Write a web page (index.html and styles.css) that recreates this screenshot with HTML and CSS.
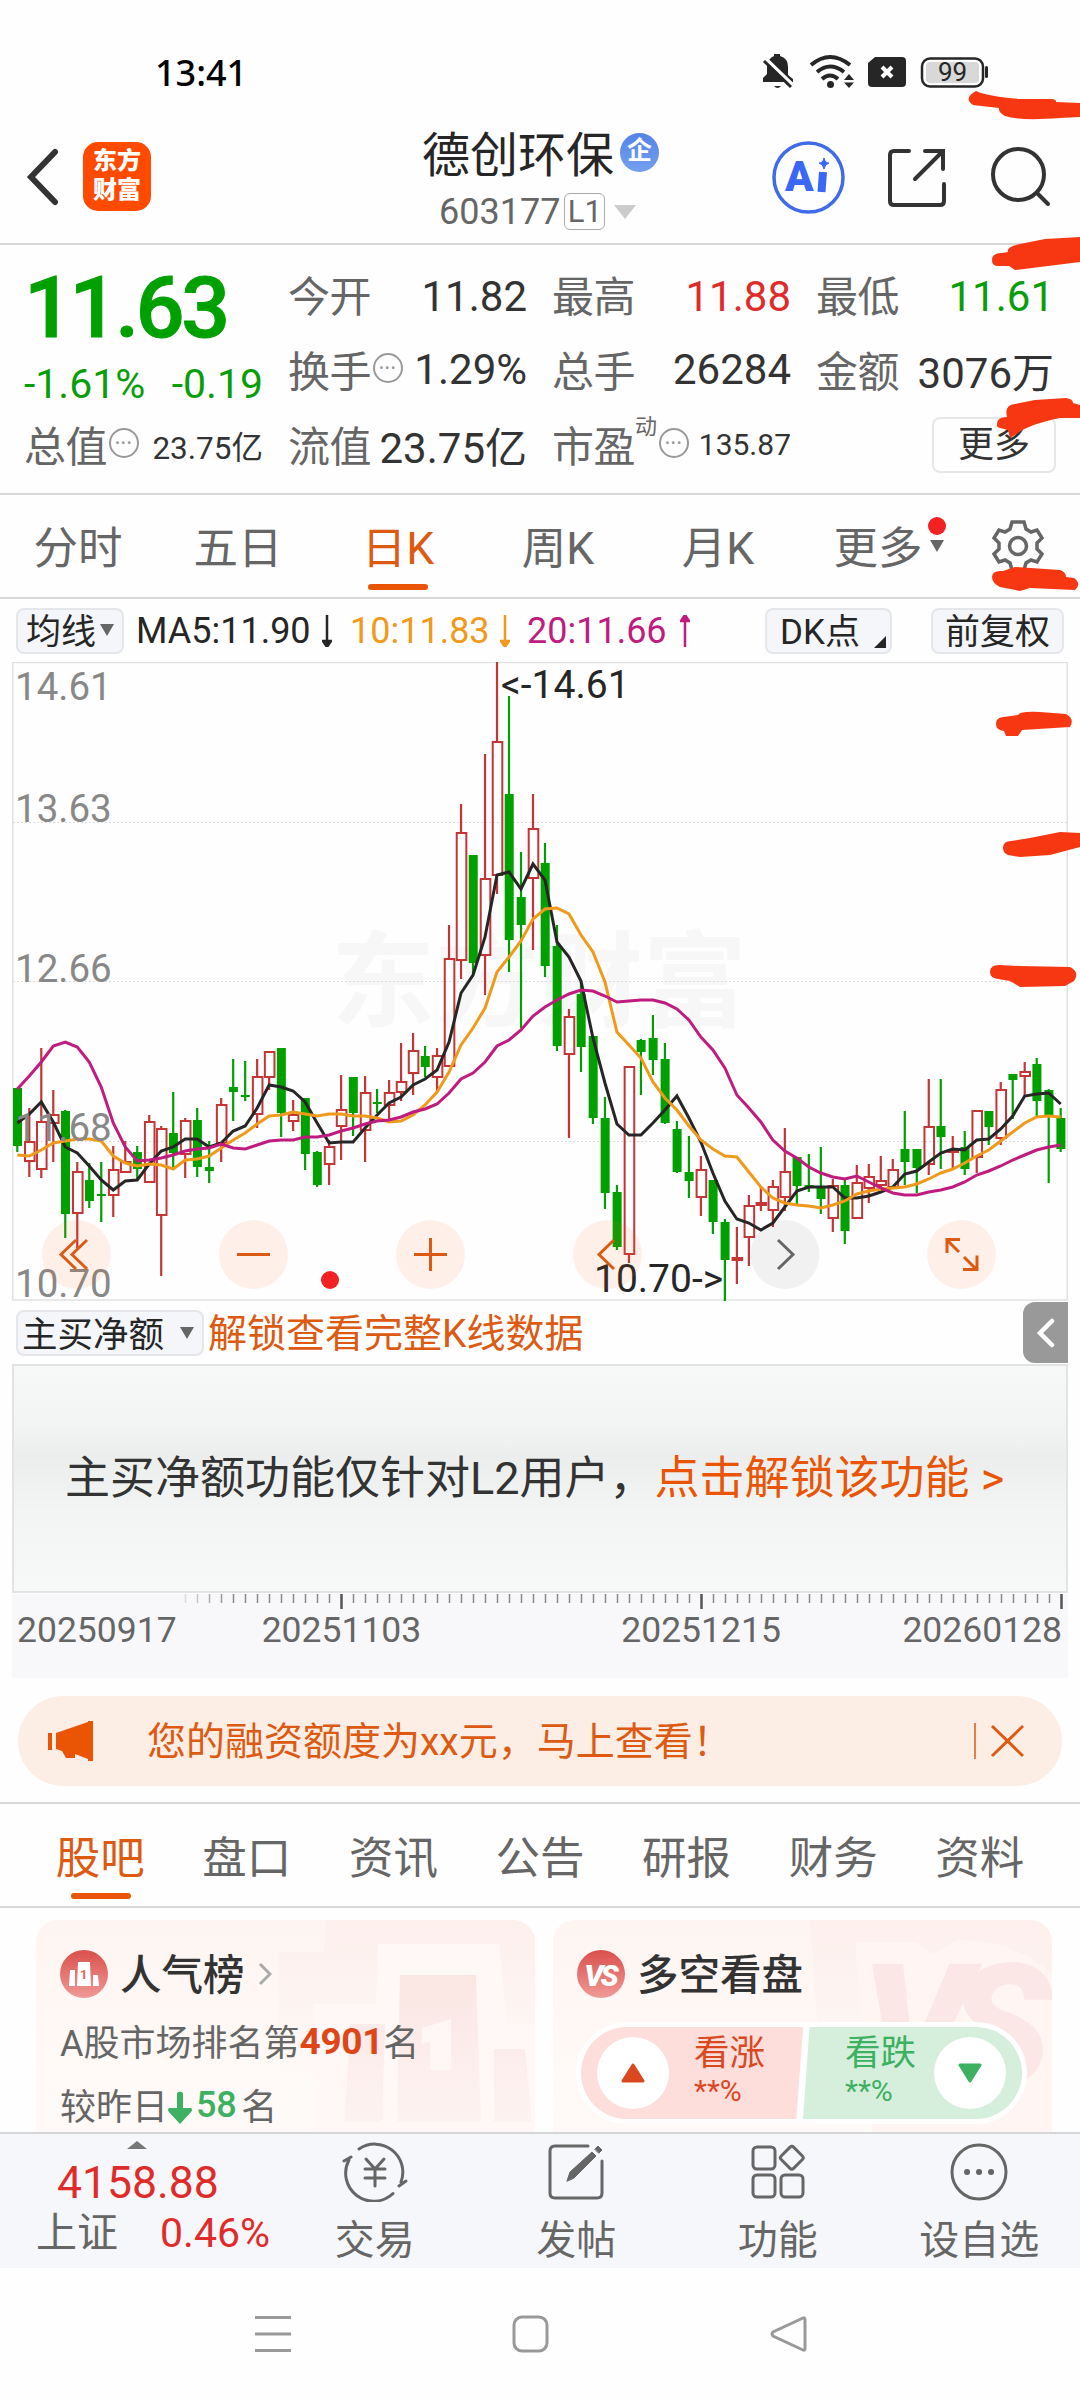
FILE: index.html
```html
<!DOCTYPE html>
<html lang="zh-CN">
<head>
    <meta charset="UTF-8">
    <meta name="viewport" content="width=device-width, initial-scale=1.0">
    <title>德创环保 603177</title>
    <link rel="stylesheet" href="styles.css">
</head>
<body>
<div class="screen">
    <div class="status-bar">
        <span class="clock">13:41</span>
        <svg class="status-icons" width="230" height="40" viewBox="760 52 230 40">
            <g fill="#262626">
                <path d="M763 82v-4l4-4V67q1-9 7-11v-2h6v2q8 2 8 11v8l5 4v3z"/>
                <path d="M774 86h7q-3.500 4-7 0z"/>
                <path d="M765 58l28 27" stroke="#fff" stroke-width="3.500"/>
                <path d="M764 61l27 26" stroke="#262626" stroke-width="3"/>
                <circle cx="830.500" cy="84.500" r="3.500"/>
                <path d="M844 80l5-6 5 6zM844 82.500l5 5.500 5-5.500z"/>
                <path d="M868 63l7-6h27q4 0 4 4v22q0 4-4 4h-30q-4 0-4-4z"/>
                <rect x="985" y="66" width="3" height="12" rx="1.500"/>
            </g>
            <g fill="none" stroke="#262626" stroke-width="4">
                <path d="M811 65q19-16 39 0M817 72q13-11 27 0M822 79q8-7 16 0"/>
                <path d="M882 67l10 10M892 67l-10 10" stroke="#fff"/>
                <rect x="922" y="58.500" width="61" height="28" rx="8" stroke-width="2.500"/>
            </g>
            <rect x="926" y="62" width="53" height="21" rx="4" fill="#d8d8d8"/>
            <text x="952.500" y="81" class="battery-text">99</text>
        </svg>
    </div>

    <div class="header">
        <svg class="back" width="34" height="58" viewBox="0 0 34 58"><path d="M29 4L5 29l24 25" /></svg>
        <div class="logo">东方<br>财富</div>
        <div class="title">
            <div class="name">德创环保<span class="qi">企</span></div>
            <div class="code">603177<span class="level">L1</span><i class="down"></i></div>
        </div>
        <svg class="tools" width="290" height="80" viewBox="770 137 290 80">
            <circle cx="808.500" cy="177.500" r="34.500" fill="none" stroke="#3f6be8" stroke-width="3.500"/>
            <path d="M824 158q1 5 5 5-4 1-5 6-1-5-5-6 4 0 5-5z" fill="#3a67f5" stroke="#3a67f5"/>
            <text x="785" y="191" class="ai">A</text>
            <path d="M823 172l-1.500 20" stroke="#3a67f5" stroke-width="8"/>
            <g fill="none" stroke="#333" stroke-width="4" stroke-linecap="round">
                <path d="M909 151h-15q-4 0-4 4v46q0 4 4 4h46q4 0 4-4v-17M925 151h18v18M942 152l-27 27"/>
                <circle cx="1018.500" cy="174.500" r="25.500"/>
                <path d="M1037 193l11 11"/>
            </g>
        </svg>
    </div>

    <div class="quote">
        <div class="price-col">
            <div class="price">11.63</div>
            <div class="change"><span>-1.61%</span><span>-0.19</span></div>
            <div class="item small"><label>总值</label><i class="dots">•••</i><b>23.75亿</b></div>
        </div>
        <div class="col">
            <div class="item"><label>今开</label><b>11.82</b></div>
            <div class="item"><label>换手</label><i class="dots">•••</i><b>1.29%</b></div>
            <div class="item"><label>流值</label><b>23.75亿</b></div>
        </div>
        <div class="col">
            <div class="item"><label>最高</label><b class="red">11.88</b></div>
            <div class="item"><label>总手</label><b>26284</b></div>
            <div class="item small pe"><label>市盈</label><sup>动</sup><i class="dots">•••</i><b>135.87</b></div>
        </div>
        <div class="col last">
            <div class="item"><label>最低</label><b class="green">11.61</b></div>
            <div class="item"><label>金额</label><b>3076万</b></div>
            <div class="item"><span class="more-btn">更多</span></div>
        </div>
    </div>

    <div class="period-tabs">
        <span>分时</span>
        <span>五日</span>
        <span class="active">日K</span>
        <span>周K</span>
        <span>月K</span>
        <span class="has-dot">更多<i class="down"></i></span>
        <svg width="56" height="56" viewBox="-28 -28 56 56">
            <path d="M-6-24H6L8-17 13-14 19-16 24-8 19-3V3L24 8 19 16 13 14 8 17 6 24H-6L-8 17-13 14-19 16-24 8-19 3V-3L-24-8-19-16-13-14-8-17z"/>
            <circle r="8.500"/>
        </svg>
    </div>

    <div class="ma-bar">
        <span class="chip ma-chip">均线<i class="down"></i></span>
        <span class="ma5">MA5:11.90</span><svg class="arr" width="10" height="32"><path d="M5 0v28M1 26l4 6 4-6z" stroke="#262626" fill="#262626"/></svg>
        <span class="ma10">10:11.83</span><svg class="arr" width="10" height="32"><path d="M5 0v28M1 26l4 6 4-6z" stroke="#ef9a1a" fill="#ef9a1a"/></svg>
        <span class="ma20">20:11.66</span><svg class="arr" width="10" height="32"><path d="M5 32V4M1 6l4-6 4 6z" stroke="#c01c80" fill="#c01c80"/></svg>
        <span class="chip dk">DK点<i class="corner"></i></span>
        <span class="chip fq">前复权</span>
    </div>

    <svg class="chart" width="1080" height="640" viewBox="-12 0 1080 640">
        <text x="319" y="357" class="watermark">东方财富</text>
        <g stroke="#ddd" stroke-dasharray="2 2">
            <path d="M1 160.500H1055M1 319.500H1055M1 479.500H1055"/>
        </g>
        <rect x="0.750" y="0.500" width="1054.500" height="637.500" fill="none" stroke="#e2e2e2" stroke-width="1.500"/>
        <g id="candles"></g>
        <g id="lines"></g>
        <g class="axis-text">
            <text x="3" y="38">14.61</text>
            <text x="3" y="160">13.63</text>
            <text x="3" y="320">12.66</text>
            <text x="3" y="479">11.68</text>
            <text x="3" y="635">10.70</text>
        </g>
        <g class="mark-text">
            <text x="489" y="36">&lt;-14.61</text>
            <text x="582" y="630">10.70-&gt;</text>
        </g>
        <g class="bubble">
            <circle cx="64.500" cy="592.500" r="34.500"/>
            <circle cx="241.500" cy="592.500" r="34.500"/>
            <circle cx="418.500" cy="592.500" r="34.500"/>
            <circle cx="595.500" cy="592.500" r="34.500"/>
            <circle cx="773" cy="592.500" r="34.500" class="off"/>
            <circle cx="949.500" cy="592.500" r="34.500"/>
        </g>
        <g class="bubble-icon">
            <path d="M64 578L49 592.500 64 607M75 578L60 592.500 75 607"/>
            <path d="M225 592.500h33M402 592.500h33M418.500 576v33"/>
            <path d="M602 578L587 592.500 602 607"/>
            <path d="M766 578L781 592.500 766 607" stroke="#666"/>
            <path d="M935 591v-13.500h13M935 578l12 12M965 593.500v14h-14M964 607l-12-12"/>
        </g>
        <circle cx="318" cy="618" r="9" fill="#f02222"/>
    </svg>

    <div class="sub-bar">
        <span class="chip"><span>主买净额</span><i class="down"></i></span>
        <span class="unlock">解锁查看完整K线数据</span>
        <span class="drawer"><svg width="18" height="30" viewBox="0 0 18 30"><path d="M15 3L3 15l12 12"/></svg></span>
    </div>

    <div class="locked">主买净额功能仅针对L2用户，<em>点击解锁该功能 &gt;</em></div>

    <div class="dates">
        <svg id="ticks" width="1056" height="17"></svg>
        <span>20250917</span><span>20251103</span><span>20251215</span><span>20260128</span>
    </div>

    <div class="banner">
        <svg width="46" height="42" viewBox="0 0 46 42" fill="#e95504"><path d="M0 13h4v17H0zM8 13L40 2V1h5v40h-5v-2l-13-5v4h-9l-4-7-6-2z"/></svg>
        <span class="msg">您的融资额度为xx元，马上查看！</span>
        <svg class="close" width="50" height="38" viewBox="0 0 50 38"><path d="M1 1v36" stroke-width="1.500"/><path d="M18 4l31 30M49 4L18 34"/></svg>
    </div>

    <div class="nav-tabs">
        <span class="active">股吧</span>
        <span>盘口</span>
        <span>资讯</span>
        <span>公告</span>
        <span>研报</span>
        <span>财务</span>
        <span>资料</span>
    </div>

    <div class="cards">
        <div class="card">
            <svg class="card-bg" width="499" height="212" viewBox="0 0 499 212">
                <path d="M290 0h209v212H242V32h46z" fill="url(#soft)"/>
                <path d="M342 24h121l8 80h28v108H278V84h62z" fill="#fff8f6"/>
                <path d="M364 55h76l5 147h-84zM314 104h35l-3 98h-37zM458 129h31l7 73h-38z" fill="url(#deep)"/>
                <path d="M386 108l29-9v51h-21v-28l-8 2z" fill="#fff7f5"/>
            </svg>
            <div class="card-title">
                <svg width="48" height="48" viewBox="0 0 48 48"><circle cx="24" cy="24" r="24" fill="url(#rd)"/><path d="M10 20h5v16H9zM18 12h12l1 24H17zM33 25h5l1 11h-6z" fill="#fff"/><text x="20" y="29" class="rank-one">1</text></svg>
                <span>人气榜</span>
                <svg class="go" width="14" height="24" viewBox="0 0 14 24"><path d="M2 2l10 10L2 22"/></svg>
            </div>
            <div class="card-line">A股市场排名第<strong>4901</strong>名</div>
            <div class="card-line second">较昨日<svg width="24" height="33" viewBox="0 0 24 33"><path d="M9 2q3-3 6 0v15h8q2 2 0 4L12 33 1 21q-2-2 0-4h8z" fill="#3db062"/></svg><strong class="up">58</strong>名</div>
        </div>
        <div class="card">
            <svg class="card-bg" width="499" height="212" viewBox="0 0 499 212">
                <path d="M257 0h242v212H272z" fill="url(#soft)"/>
                <path d="M302 22h62l16 12 24-14q60 0 95 35v157H320z" fill="#fff5f3"/>
                <text x="308" y="165" class="vs-back">VS</text>
            </svg>
            <div class="card-title">
                <svg width="48" height="48" viewBox="0 0 48 48"><circle cx="24" cy="24" r="24" fill="url(#rd)"/><text x="23" y="36" class="vs">VS</text></svg>
                <span>多空看盘</span>
            </div>
            <div class="vote">
                <div class="long"><i><svg width="24" height="20" viewBox="0 0 24 20"><path d="M12 2l10 16H2z"/></svg></i><span>看涨<small>**%</small></span></div>
                <div class="short"><span>看跌<small>**%</small></span><i><svg width="24" height="20" viewBox="0 0 24 20"><path d="M12 18L22 2H2z"/></svg></i></div>
            </div>
        </div>
        <svg width="0" height="0" class="defs">
            <linearGradient id="rd" x2="0" y2="1"><stop stop-color="#d9504c"/><stop offset="1" stop-color="#f09a96"/></linearGradient>
            <linearGradient id="soft" x2="0" y2="1"><stop stop-color="#fdefec"/><stop offset="0.800" stop-color="#fefaf8"/></linearGradient>
            <linearGradient id="deep" x2="0" y2="1"><stop stop-color="#fae6e3"/><stop offset="1" stop-color="#fdf3f1"/></linearGradient>
        </svg>
    </div>

    <div class="bottom-bar">
        <div class="index">
            <i class="caret"></i>
            <div class="point">4158.88</div>
            <div class="pct"><span>上证</span><b>0.46%</b></div>
        </div>
        <div class="action">
            <svg width="66" height="60" viewBox="-33 -30 66 60">
                <path d="M-16-23A28 28 0 0 1 26 10M24 14l7-5M18 21.500A28 28 0 0 1-26-12M-24-15l-7 4"/>
                <path d="M-9-13L0-3 9-13M0-3V14M-10-3H10M-10 6H10"/>
            </svg>
            交易
        </div>
        <div class="action">
            <svg width="60" height="60" viewBox="-30 -30 60 60">
                <path d="M12-26H-21q-5 0-5 5V21q0 5 5 5H21q5 0 5-5V-11"/>
                <path d="M-9 9l3-9L16-20l4 4L-2 6zM19-23l3-3 4 4-3 3z" fill="#666" stroke-width="1"/>
            </svg>
            发帖
        </div>
        <div class="action">
            <svg width="60" height="60" viewBox="-30 -30 60 60">
                <rect x="-25" y="-25" width="22" height="22" rx="4"/>
                <rect x="-25" y="3" width="22" height="22" rx="4"/>
                <rect x="3" y="3" width="22" height="22" rx="4"/>
                <rect x="5" y="-23" width="17.500" height="17.500" rx="2.500" transform="rotate(45 13.800 -14.200)"/>
            </svg>
            功能
        </div>
        <div class="action">
            <svg width="60" height="60" viewBox="-30 -30 60 60">
                <circle r="27"/>
                <path d="M-12 0h.1M0 0h.1M12 0h.1" stroke-width="6"/>
            </svg>
            设自选
        </div>
    </div>

    <div class="system-nav">
        <svg width="36" height="38" viewBox="0 0 36 38"><path d="M0 2.500h36M0 19h36M0 35.500h36"/></svg>
        <svg width="38" height="38" viewBox="0 0 38 38"><rect x="3" y="2" width="33" height="34" rx="8"/></svg>
        <svg width="38" height="38" viewBox="0 0 38 38"><path d="M34 3q2-1 2 2v28q0 3-2 2L4 21q-2-2 0-4z"/></svg>
    </div>

    <!-- 红色涂鸦 -->
    <svg class="scribble" width="1080" height="1000" viewBox="0 0 1080 1000" fill="#f73711">
        <path d="M976 91Q990 97 1020 99L1052 99Q1057 100 1056 102L1080 103V117L1060 118Q1020 121 1005 116 998 112 999 108L973 105Q963 98 976 91z"/>
        <path d="M992 260Q992 253 1002 253L1008 252Q1006 247 1020 244L1045 239 1080 237V262L1040 267 1015 270 1009 266H998Q992 266 992 260z"/>
        <path d="M997 424Q997 417 1007 417 1004 405 1015 404L1035 400 1066 398Q1073 399 1073 403L1080 405V418L1060 418Q1030 424 1018 433L1010 438 1008 430 1000 428Q996 427 997 424z"/>
        <path d="M992 577Q992 570 1003 571L1015 567 1060 570Q1066 572 1066 577L1074 578Q1082 584 1075 590L1030 588 1020 591 1000 587Q992 583 992 577z"/>
        <path d="M996 724Q996 717 1004 717L1018 715Q1020 711 1040 712L1066 714Q1075 719 1070 727L1022 730 1018 736H1006L1004 731Q996 730 996 724z"/>
        <path d="M1003 848Q1003 841 1011 841L1030 838 1060 832 1080 833V847L1050 855 1020 857 1008 855Q1003 853 1003 848z"/>
        <path d="M990 972Q990 965 999 965L1020 966 1070 967Q1080 972 1074 981L1065 986 1020 987 1010 981 998 979Q990 978 990 972z"/>
    </svg>
</div>
<script src="script.js"></script>
</body>
</html>
```
FILE: styles.css
```css
* {
    box-sizing: border-box;
}
body {
    margin: 0;
    background: #fefefe;
    font-family: Roboto, "Noto Sans CJK SC", sans-serif;
    color: #333;
}
.screen {
    position: relative;
    width: 1080px;
    height: 2400px;
    overflow: hidden;
    display: flex;
    flex-direction: column;
}
.screen > * {
    flex: none;
}
svg {
    display: block;
    flex: none;
}
i, em {
    font-style: normal;
}
.down {
    display: inline-block;
    border: 7px solid transparent;
    border-top: 12px solid #666;
    border-bottom: 0;
}
.red { color: #e02b2b; }
.green { color: #0a9d0a; }

/* 状态栏 */
.status-bar {
    height: 104px;
    padding: 52px 90px 0 155px;
    display: flex;
    justify-content: space-between;
}
.clock {
    font: 500 36px/42px "Noto Sans", sans-serif;
    color: #000;
}
.battery-text {
    font-size: 26px;
    text-anchor: middle;
    fill: #262626;
}

/* 标题 */
.header {
    height: 141px;
    padding: 0 20px 0 26px;
    display: flex;
    align-items: center;
    border-bottom: 2px solid #d8d8d8;
}
.back {
    margin-top: 6px;
    fill: none;
    stroke: #333;
    stroke-width: 6;
    stroke-linecap: round;
}
.logo {
    width: 68px;
    height: 69px;
    margin: 6px 0 0 23px;
    padding-top: 5px;
    border-radius: 15px;
    background: #ff4a00;
    color: #fff;
    font-size: 24px;
    font-weight: 900;
    line-height: 29px;
    text-align: center;
}
.title {
    width: 406px;
    margin-left: 213px;
    padding: 12px 0 0 58px;
}
.name {
    display: flex;
    align-items: center;
    height: 58px;
    font-size: 48px;
    color: #262626;
}
.qi {
    width: 39px;
    height: 39px;
    margin: 4px 0 0 6px;
    border-radius: 50%;
    background: linear-gradient(#5583e6, #74a0f0);
    color: #fff;
    font-size: 25px;
    font-weight: 700;
    line-height: 36px;
    text-align: center;
}
.code {
    display: flex;
    align-items: center;
    height: 58px;
    padding: 6px 0 0 17px;
    font-size: 36px;
    color: #666;
}
.level {
    width: 41px;
    height: 37px;
    margin: 0 9px 0 4px;
    border: 1.5px solid #aaa;
    border-radius: 6px;
    font-size: 31px;
    line-height: 35px;
    text-align: center;
}
.code .down {
    border-width: 14px 11px 0;
    border-top-color: #ccc;
}
.tools {
    margin-top: 6px;
}
.ai {
    font-size: 42px;
    font-weight: 900;
    fill: #3a67f5;
}

/* 行情 */
.quote {
    height: 250px;
    padding: 14px 24px 0 24px;
    display: flex;
    border-bottom: 2px solid #d8d8d8;
}
.price-col {
    width: 239px;
    margin-right: 25px;
}
.price {
    height: 100px;
    font-size: 86px;
    font-weight: 500;
    letter-spacing: -3.3px;
    line-height: 98px;
    color: #00a000;
    -webkit-text-stroke: 1px #00a000;
}
.change {
    display: flex;
    justify-content: space-between;
    height: 50px;
    font-size: 41px;
    line-height: 50px;
    color: #0a9d0a;
}
.col {
    width: 239px;
    margin-right: 25px;
}
.col.last {
    width: 238px;
    margin-right: 0;
}
.item {
    display: flex;
    align-items: center;
    height: 75px;
    font-size: 42px;
}
.item label {
    margin-top: -6px;
    letter-spacing: -0.5px;
    color: #666;
}
.item b {
    margin-left: auto;
    font-weight: 400;
    white-space: nowrap;
}
.item:nth-child(2) b, .item:nth-child(3) b {
    margin-top: -4px;
}
.item.small b {
    font-size: 31.5px;
}
.item.pe b {
    font-size: 30px;
}
.item sup {
    align-self: flex-start;
    font-size: 22px;
    line-height: 30px;
    margin-top: 3px;
    color: #666;
}
.dots {
    width: 30px;
    height: 30px;
    margin: -7px 0 0 2px;
    border: 2.5px solid #999;
    border-radius: 50%;
    color: #999;
    font-size: 13px;
    letter-spacing: 1.5px;
    line-height: 25px;
    text-align: center;
    white-space: nowrap;
}
.more-btn {
    width: 124px;
    height: 56px;
    margin: -4px 0 0 116px;
    border: 2px solid #e5e7e9;
    border-radius: 8px;
    font-size: 36px;
    line-height: 52px;
    text-align: center;
    flex: none;
}

/* 周期 */
.period-tabs {
    height: 104px;
    margin-left: -2px;
    display: flex;
    align-items: center;
    border-bottom: 2px solid #d8d8d8;
}
.period-tabs span {
    position: relative;
    width: 160px;
    padding-top: 6px;
    font-size: 44.5px;
    line-height: 98px;
    text-align: center;
    color: #666;
}
.period-tabs .active, .nav-tabs .active {
    color: #dd5a12;
}
.period-tabs .active::after, .nav-tabs .active::after {
    content: "";
    position: absolute;
    left: 50px;
    bottom: 8px;
    width: 60px;
    height: 6px;
    border-radius: 3px;
    background: #e95504;
}
.has-dot .down {
    position: absolute;
    right: 14px;
    top: 46px;
}
.has-dot::before {
    content: "";
    position: absolute;
    right: 12px;
    top: 23px;
    width: 18px;
    height: 18px;
    border-radius: 50%;
    background: #f02222;
}
.period-tabs svg {
    margin-left: 32px;
    fill: none;
    stroke: #666;
    stroke-width: 3.5;
}

/* 均线 */
.ma-bar {
    height: 63px;
    padding: 0 16px 0 16px;
    display: flex;
    align-items: center;
    font-size: 36px;
    white-space: nowrap;
}
.chip {
    display: flex;
    align-items: center;
    height: 46px;
    padding-bottom: 4px;
    border: 2px solid #e4e6ea;
    border-radius: 8px;
    background: #f5f6fa;
    font-size: 35px;
    color: #262626;
}
.chip .down {
    margin-top: 3px;
}
.ma-chip {
    width: 108px;
    padding-left: 8px;
}
.ma-chip .down {
    margin-left: 4px;
}
.ma5 {
    width: 184px;
    padding-left: 12px;
    color: #262626;
}
.ma10 {
    width: 167px;
    padding-left: 18px;
    color: #ef9a1a;
}
.ma20 {
    width: 169px;
    padding-left: 17px;
    color: #c01c80;
}
.arr {
    margin-left: 1px;
    stroke-width: 2.5;
}
.ma5 + .arr { margin-left: 14px; }
.dk {
    position: relative;
    width: 127px;
    margin-left: auto;
    padding-left: 13px;
}
.corner {
    position: absolute;
    right: 4px;
    bottom: 4px;
    border-left: 12px solid transparent;
    border-bottom: 12px solid #262626;
}
.fq {
    width: 133px;
    margin-left: 39px;
    padding-left: 12px;
}

/* K线图 */
.chart {
    height: 640px;
}
.watermark {
    font-size: 104px;
    font-weight: 700;
    fill: #f7f7f7;
}
.axis-text {
    font-size: 38.5px;
    fill: #888;
}
.mark-text {
    font-size: 39px;
    fill: #262626;
}
.bubble circle {
    fill: rgba(250, 100, 20, 0.09);
}
.bubble .off {
    fill: rgba(0, 0, 0, 0.05);
}
.bubble-icon {
    fill: none;
    stroke: #dd5a12;
    stroke-width: 3;
}
.sub-bar {
    height: 62px;
    padding-left: 16px;
    display: flex;
    align-items: center;
}
.sub-bar .chip {
    width: 188px;
    padding-left: 4px;
    font-size: 35.5px;
}
.sub-bar .down {
    margin-left: 16px;
}
.unlock {
    margin: -6px 0 0 4px;
    font-size: 39px;
    color: #dd5a12;
}
.drawer {
    width: 45px;
    height: 61px;
    margin: -1px 12px 0 auto;
    padding: 16px 0 0 14px;
    border-radius: 12px 0 0 12px;
    background: #999;
}
.drawer svg {
    fill: none;
    stroke: #fff;
    stroke-width: 4.5;
    stroke-linecap: round;
}
.locked {
    height: 229px;
    margin: 0 12px;
    padding-left: 51px;
    border: 2px solid #e2e4e4;
    background: linear-gradient(#f7f8f8, #f3f4f4 25%, #eceeee 40%, #f3f5f5 65%, #f6f9f7);
    font-size: 45px;
    line-height: 226px;
    white-space: nowrap;
}
.locked em {
    color: #e95504;
}
.dates {
    height: 84px;
    margin: 1px 12px 18px;
    padding: 0 6px 0 5px;
    display: flex;
    flex-wrap: wrap;
    align-content: flex-start;
    background: #f8f8fb;
    font-size: 35.5px;
    line-height: 38px;
    color: #666;
}
.dates svg {
    margin: 0 -6px 0 -5px;
}
.dates span:nth-of-type(2) { margin-left: 85px; }
.dates span:nth-of-type(3) { margin-left: 200px; }
.dates span:nth-of-type(4) { margin-left: auto; }

.banner {
    height: 90px;
    margin: 0 18px 16px;
    padding: 0 38px 0 30px;
    display: flex;
    align-items: center;
    border-radius: 45px;
    background: #fceee4;
    color: #dd5a12;
    font-size: 39px;
}
.msg {
    margin: -6px 0 0 53px;
}
.close {
    margin-left: auto;
    fill: none;
    stroke: #dd5a12;
    stroke-width: 3;
}

/* 栏目 */
.nav-tabs {
    height: 106px;
    padding: 0 27px;
    display: flex;
    border-top: 2px solid #d8d8d8;
    border-bottom: 2px solid #d8d8d8;
}
.nav-tabs span {
    position: relative;
    flex: 1;
    font-size: 44.5px;
    line-height: 111px;
    text-align: center;
    color: #666;
}
.nav-tabs .active::after {
    left: 44px;
    bottom: 7px;
}
.cards {
    height: 224px;
    padding: 12px 28px 0 36px;
    display: flex;
    gap: 18px;
    overflow: hidden;
}
.card {
    position: relative;
    width: 499px;
    height: 240px;
    padding: 30px 0 0 24px;
    border-radius: 22px;
    overflow: hidden;
    background: linear-gradient(#fef5f2, #fffaf8 80%);
}
.card-bg {
    position: absolute;
    left: 0;
    top: 0;
}
.card-title {
    position: relative;
    display: flex;
    align-items: center;
    gap: 13px;
    height: 48px;
    font-size: 41.5px;
    font-weight: 500;
    color: #333;
}
.card-title span {
    margin: -4px 0 0 -1px;
}
.go {
    fill: none;
    stroke: #aaa;
    stroke-width: 3;
}
.rank-one {
    font-size: 13px;
    font-weight: 700;
    fill: #e06560;
}
.vs {
    font-size: 30px;
    font-weight: 900;
    font-style: italic;
    text-anchor: middle;
    letter-spacing: -3px;
    fill: #fff;
}
.vs-back {
    font-size: 170px;
    font-weight: 900;
    font-style: italic;
    letter-spacing: -22px;
    fill: #fbe8e6;
}
.card-line {
    position: relative;
    display: flex;
    align-items: center;
    height: 48px;
    margin-top: 18px;
    font-size: 36px;
    color: #666;
}
.card-line.second {
    margin-top: 16px;
}
.card-line strong {
    margin-top: 2px;
    font-size: 37px;
    letter-spacing: -0.3px;
    color: #de4618;
}
.card-line svg {
    margin: 6px 4px 0 0;
}
.card-line .up {
    margin-right: 5px;
    font-weight: 500;
    font-size: 36px;
    color: #3db062;
}
.vote {
    position: relative;
    width: 451px;
    height: 102px;
    margin-top: 24px;
    margin-left: -1px;
    padding: 5px;
    display: flex;
    border-radius: 51px;
    background: #fff;
    overflow: hidden;
}
.vote > div {
    display: flex;
    align-items: center;
    height: 92px;
}
.long {
    width: 222px;
    padding-left: 16px;
    border-radius: 46px 0 0 46px;
    background: #fddedb;
    clip-path: polygon(0 0, 100% 0, 97% 100%, 0 100%);
    color: #d9481f;
}
.short {
    width: 219px;
    padding-left: 42px;
    border-radius: 0 46px 46px 0;
    background: #d6eedc;
    clip-path: polygon(3% 0, 100% 0, 100% 100%, 0 100%);
    color: #3db062;
}
.vote i {
    width: 72px;
    height: 72px;
    padding: 26px 24px;
    border-radius: 50%;
    background: #fff;
}
.vote path {
    fill: currentColor;
    stroke: currentColor;
    stroke-width: 3;
    stroke-linejoin: round;
}
.vote span {
    margin-top: -4px;
    font-size: 35.5px;
    line-height: 40px;
}
.long span { margin-left: 25px; }
.short span { margin-right: 18px; }
.vote small {
    display: block;
    font-size: 30px;
    line-height: 36px;
}
.defs {
    position: absolute;
}

/* 底部 */
.bottom-bar {
    height: 136px;
    display: flex;
    border-top: 2px solid #d5d6d8;
    background: #f6f7fa;
    color: #666;
}
.index {
    width: 274px;
    padding-top: 7px;
}
.caret {
    display: block;
    width: 0;
    margin-left: 127px;
    border: 10px solid transparent;
    border-top: 0;
    border-bottom: 8px solid #777;
}
.point {
    padding-left: 57px;
    font-size: 44.5px;
    line-height: 68px;
    color: #e02b2b;
}
.pct {
    display: flex;
    justify-content: space-between;
    padding: 0 4px 0 36px;
    font-size: 41px;
    line-height: 33px;
}
.pct b {
    font-weight: 400;
    font-size: 41px;
    color: #e02b2b;
}
.action {
    width: 201.5px;
    padding-top: 8px;
    display: flex;
    flex-direction: column;
    align-items: center;
    font-size: 40px;
    line-height: 77px;
}
.action svg {
    fill: none;
    stroke: #666;
    stroke-width: 3;
    stroke-linecap: round;
}
.system-nav {
    height: 132px;
    padding: 47px 273px 0 255px;
    display: flex;
    justify-content: space-between;
}
.system-nav svg {
    fill: none;
    stroke: #999;
    stroke-width: 3;
}
.scribble {
    position: absolute;
    left: 0;
    top: 0;
}
```
FILE: script.js
```js
// 每根K线: [方向, 最高, 实体上, 实体下, 最低]，单位为图内像素
const bars = [
    'g',426,426,484,490, 'r',446,480,499,515, 'r',386,460,507,516, 'r',428,453,461,500,
    'g',448,449,552,576, 'r',500,510,551,586, 'g',501,518,539,546, 'g',500,532,534,560,
    'r',484,508,533,555, 'r',479,500,510,510, 'g',484,490,507,518, 'r',453,460,520,520,
    'r',464,467,553,614, 'g',430,471,491,508, 'r',456,459,492,516, 'g',446,458,505,515,
    'g',479,505,509,521, 'r',436,443,481,500, 'g',397,425,430,459, 'g',399,433,435,439,
    'r',397,415,452,466, 'r',390,390,415,428, 'g',386,386,451,475, 'r',438,453,459,469,
    'g',436,436,492,508, 'g',489,490,523,525, 'r',478,485,502,523, 'r',413,448,464,498,
    'g',415,415,451,474, 'r',414,431,468,500, 'g',427,440,442,451, 'r',418,431,443,458,
    'r',381,420,430,439, 'r',371,389,411,433, 'g',384,394,405,415, 'r',386,394,415,430,
    'r',263,297,404,404, 'r',142,171,298,317, 'g',193,193,301,313, 'r',92,217,293,333,
    'r',0,80,213,232, 'g',34,132,278,310, 'g',190,235,263,366, 'r',132,167,216,288,
    'g',181,201,304,315, 'g',263,284,384,389, 'r',347,355,392,476, 'g',320,332,385,410,
    'g',374,374,456,462, 'g',435,456,531,547, 'g',523,530,585,588, 'r',405,405,592,601,
    'g',377,378,390,433, 'g',353,376,398,413, 'g',381,397,461,462, 'g',459,467,510,511,
    'g',474,510,519,536, 'r',494,508,535,554, 'g',518,518,560,572, 'g',557,560,598,639,
    'r',565,596,597,622, 'r',533,544,575,604, 'r',525,541,543,549, 'r',518,525,548,565,
    'r',466,510,535,549, 'g',495,495,524,542, 'g',492,523,525,530, 'g',485,525,537,552,
    'r',517,524,556,570, 'g',518,523,569,582, 'r',503,521,556,556, 'r',502,515,526,541,
    'r',494,519,523,525, 'r',497,508,525,526, 'g',449,487,500,523, 'g',487,487,506,531,
    'r',417,465,502,513, 'g',417,464,475,507, 'r',474,488,490,507, 'g',469,485,507,513,
    'r',448,449,495,511, 'g',449,449,465,483, 'r',420,428,476,483, 'g',412,412,418,457,
    'r',400,410,414,434, 'g',396,402,439,454, 'g',427,428,453,521, 'g',446,456,487,490
];

const ma5 = [461,452,440,460,485,491,504,518,528,519,518,502,489,485,477,477,485,481,469,464,446,423,425,429,440,461,481,480,480,466,453,441,435,423,417,408,380,331,313,275,213,210,227,202,218,280,295,319,376,421,462,473,473,461,448,434,456,480,511,539,557,561,568,561,545,529,525,525,525,536,536,534,530,525,512,509,500,491,487,488,478,477,467,454,434,432,431,442];
const ma10 = [493,494,488,481,479,477,477,479,494,501,504,502,503,507,498,497,494,486,478,471,462,454,453,450,452,454,452,452,454,454,456,460,459,453,443,430,410,383,366,346,310,295,279,257,247,246,252,273,290,320,370,383,396,420,436,448,464,478,487,494,495,510,525,536,541,543,544,546,543,539,532,529,527,526,525,522,517,511,507,501,494,488,479,470,461,455,454,455];
const ma20 = [427,414,400,384,380,385,400,425,461,485,499,498,496,493,489,487,486,482,486,487,483,479,478,478,475,475,473,469,466,462,459,458,455,450,447,442,431,417,411,400,384,378,368,354,345,338,332,328,329,334,340,339,338,338,341,347,358,375,388,406,433,446,460,478,489,496,505,511,515,517,514,520,526,531,533,533,530,528,525,520,513,509,504,498,493,488,485,483];

const xAt = i => 5.3 + i * 11.993;

let out = '';
for (let i = 0; i < bars.length / 5; i++) {
    const [dir, high, top, bottom, low] = bars.slice(i * 5, i * 5 + 5);
    const x = xAt(i);
    const h = Math.max(bottom - top, 2);
    if (dir === 'g') {
        out += `<path d="M${x} ${high}V${low}" stroke="#00a000" stroke-width="2.2"/>`;
        out += `<rect x="${x - 4.3}" y="${top}" width="9" height="${h}" fill="#00a000"/>`;
    } else {
        out += `<path d="M${x} ${high}V${top}M${x} ${bottom}V${low}" stroke="#c43535" stroke-width="2.2"/>`;
        out += `<rect x="${x - 4.3}" y="${top}" width="9.6" height="${h}" fill="none" stroke="#c43535" stroke-width="2"/>`;
    }
}
document.getElementById('candles').innerHTML = out;

const line = (data, color) =>
    `<polyline points="${data.map((y, i) => xAt(i) + ',' + y).join(' ')}" fill="none" stroke="${color}" stroke-width="3"/>`;
document.getElementById('lines').innerHTML = line(ma5, '#262626') + line(ma10, '#ef9a1a') + line(ma20, '#c01c80');

// 时间轴刻度，左侧渐隐
let ticks = '';
for (let i = 0; i <= 73; i++) {
    const x = 173.5 + i * 12;
    const major = i === 13 || i === 43 || i === 73;
    ticks += `<path d="M${x} 0V${major ? 15 : 9}" stroke="${major ? '#555' : '#888'}" stroke-width="${major ? 2.5 : 1.5}" opacity="${Math.min(1, 0.25 + i * 0.2)}"/>`;
}
document.getElementById('ticks').innerHTML = ticks;
```
